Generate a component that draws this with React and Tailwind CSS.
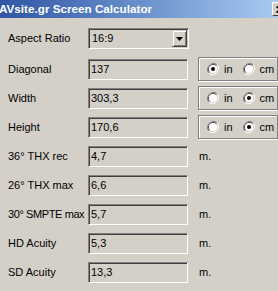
import React from "react";

function Radio({ checked }) {
  return (
    <svg width="12" height="12" viewBox="0 0 12 12" className="shrink-0">
      <path d="M10.2 1.8 A6 6 0 0 0 1.8 10.2" fill="none" stroke="#808080" strokeWidth="1" />
      <path d="M1.8 10.2 A6 6 0 0 0 10.2 1.8" fill="none" stroke="#ffffff" strokeWidth="1" />
      <path d="M9.5 2.5 A5 5 0 0 0 2.5 9.5" fill="none" stroke="#404040" strokeWidth="1" />
      <path d="M2.5 9.5 A5 5 0 0 0 9.5 2.5" fill="none" stroke="#d4d0c8" strokeWidth="1" />
      <circle cx="6" cy="6" r="4" fill="#ffffff" />
      {checked && <circle cx="6" cy="6" r="2" fill="#000000" />}
    </svg>
  );
}

function Edit({ value }) {
  return (
    <div className="w-[100px] h-[21px] bg-[#d4d0c8] border border-t-[#808080] border-l-[#808080] border-b-white border-r-white shadow-[inset_1px_1px_0_#404040,inset_-1px_-1px_0_#d4d0c8] flex items-center pl-[2px] shrink-0">
      {value}
    </div>
  );
}

function Units({ inch }) {
  return (
    <div className="ml-[10px] mt-[-2px] w-[80px] h-[24px] border border-[#808080] shadow-[inset_1px_1px_0_#fff,1px_1px_0_#fff] flex items-center pl-[8px] shrink-0">
      <Radio checked={inch} />
      <span className="ml-[5px]">in</span>
      <span className="ml-[10px]"><Radio checked={!inch} /></span>
      <span className="ml-[5px]">cm</span>
    </div>
  );
}

function Row({ label, value, children, tight }) {
  return (
    <div className="flex items-start h-[21px]">
      <div className={tight ? "w-[80px] h-[21px] flex items-center whitespace-nowrap tracking-[-0.4px]" : "w-[80px] h-[21px] flex items-center whitespace-nowrap"}>{label}</div>
      <Edit value={value} />
      {children}
    </div>
  );
}

function M() {
  return <div className="ml-[11px] h-[21px] flex items-center">m.</div>;
}

export default function App() {
  return (
    <div
      className="w-[278px] h-[291px] bg-[#d4d0c8] overflow-hidden text-[11px] text-black"
      style={{ fontFamily: '"Liberation Sans", Arial, sans-serif' }}
    >
      <div className="h-[18px] flex items-center bg-gradient-to-r from-[#2f55a4] to-[#a8cbf1]">
        <span className="text-white font-bold text-[11.7px] ml-[-1px] whitespace-nowrap">AVsite.gr Screen Calculator</span>
        <div className="ml-auto mr-[-10px] w-[16px] h-[14px] bg-[#d4d0c8] border border-t-white border-l-white border-b-[#404040] border-r-[#404040] flex items-center justify-center">
          <svg width="8" height="7" viewBox="0 0 8 7">
            <path d="M0.5 0.5L7.5 6.5M7.5 0.5L0.5 6.5" stroke="#000" strokeWidth="1.6" />
          </svg>
        </div>
      </div>
      <div className="pl-[8px] pt-[10px] flex flex-col">
        <div className="flex items-start h-[21px] mb-[10px]">
          <div className="w-[80px] h-[21px] flex items-center">Aspect Ratio</div>
          <div className="w-[101px] h-[21px] bg-[#d4d0c8] border border-t-[#808080] border-l-[#808080] border-b-white border-r-white shadow-[inset_1px_1px_0_#404040,inset_-1px_-1px_0_#d4d0c8] flex items-center pl-[3px] pr-[1px]">
            <span className="flex-1">16:9</span>
            <div className="w-[15px] h-[17px] border border-t-[#d4d0c8] border-l-[#d4d0c8] border-b-[#404040] border-r-[#404040] shadow-[inset_1px_1px_0_#fff,inset_-1px_-1px_0_#808080] flex items-center justify-center">
              <svg width="7" height="4" viewBox="0 0 7 4"><path d="M0 0H7L3.5 4Z" fill="#000" /></svg>
            </div>
          </div>
        </div>
        <div className="flex flex-col gap-[8px]">
          <Row label="Diagonal" value="137"><Units inch={true} /></Row>
          <Row label="Width" value="303,3"><Units inch={false} /></Row>
          <Row label="Height" value="170,6"><Units inch={false} /></Row>
          <Row label="36° THX rec" value="4,7"><M /></Row>
          <Row label="26° THX max" value="6,6"><M /></Row>
          <Row label="30° SMPTE max" value="5,7" tight><M /></Row>
          <Row label="HD Acuity" value="5,3"><M /></Row>
          <Row label="SD Acuity" value="13,3"><M /></Row>
        </div>
      </div>
    </div>
  );
}
